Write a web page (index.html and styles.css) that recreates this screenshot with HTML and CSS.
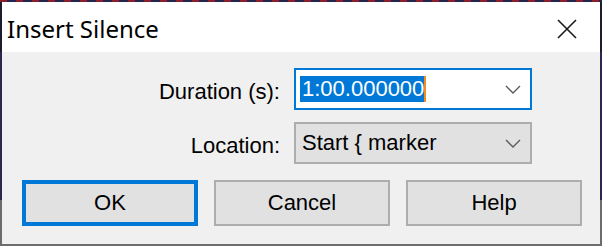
FILE: index.html
```html
<!DOCTYPE html>
<html lang="en">
<head>
    <meta charset="UTF-8">
    <meta name="viewport" content="width=device-width, initial-scale=1.0">
    <title>Insert Silence</title>
    <link rel="stylesheet" href="styles.css">
</head>
<body>
    <div class="dialog">
        <div class="titlebar">
            <span class="title">Insert Silence</span>
            <svg class="close-icon" width="20" height="20" viewBox="0 0 20 20">
                <path d="M1 1 L19 19 M19 1 L1 19" stroke="#1a1a1a" stroke-width="1.6" fill="none"/>
            </svg>
        </div>

        <div class="content">
            <div class="fields">
                <label class="field-label">Duration (s):</label>
                <div class="combo combo-focused">
                    <span class="combo-value"><span class="selection">1:00.000000</span></span>
                    <svg class="chevron" width="16" height="9" viewBox="0 0 16 9">
                        <path d="M1 1 L8 8 L15 1" stroke="#5a5a5a" stroke-width="1.4" fill="none"/>
                    </svg>
                </div>

                <label class="field-label">Location:</label>
                <div class="combo combo-list">
                    <span class="combo-value">Start { marker</span>
                    <svg class="chevron" width="16" height="9" viewBox="0 0 16 9">
                        <path d="M1 1 L8 8 L15 1" stroke="#5a5a5a" stroke-width="1.4" fill="none"/>
                    </svg>
                </div>
            </div>

            <div class="buttons">
                <button class="btn btn-default">OK</button>
                <button class="btn">Cancel</button>
                <button class="btn">Help</button>
            </div>
        </div>
    </div>
</body>
</html>
```

FILE: styles.css
```css
* {
    margin: 0;
    padding: 0;
    box-sizing: border-box;
}

body {
    width: 602px;
    height: 246px;
    padding: 2px;
    overflow: hidden;
    background:
        repeating-linear-gradient(90deg, #8a1f2a 0 7px, #26234f 7px 16px) top / 100% 2px no-repeat,
        linear-gradient(to bottom, #1c1c2c 0, #1c1c2c 52px, #2a2750 52px, #2a2750 200px, #6c6c6c 200px);
}

.dialog {
    display: flex;
    flex-direction: column;
    height: 242px;
    width: 598px;
}

.titlebar {
    height: 50px;
    background: #ffffff;
    display: flex;
    align-items: center;
    justify-content: space-between;
    padding: 0 23px 0 5px;
}

.title {
    font-family: "Noto Sans", sans-serif;
    font-size: 24px;
    color: #000;
    margin-top: 2px;
}

.close-icon {
    display: block;
    margin-top: 3px;
}

.content {
    flex: 1;
    background: #f0f0f0;
    padding: 16px 18px 0 20px;
    font-family: "Liberation Sans", Arial, sans-serif;
    font-size: 22px;
    color: #000;
}

.fields {
    display: grid;
    grid-template-columns: 258px 238px;
    column-gap: 14px;
    row-gap: 12px;
}

.field-label {
    text-align: right;
    align-self: center;
    padding-top: 6px;
}

.combo {
    height: 42px;
    display: flex;
    align-items: center;
    justify-content: space-between;
    padding: 0 9px 0 4px;
    border: 2px solid #adadad;
}

.combo-focused {
    background: #ffffff;
    border-color: #0078d7;
}

.combo-list {
    background: #e1e1e1;
    padding-left: 6px;
}

.selection {
    display: inline-block;
    background: #0078d7;
    color: #ffffff;
    padding: 1px 0 1px 2px;
    border-right: 2px solid #f58a1f;
    line-height: 24px;
}

.chevron {
    display: block;
}

.buttons {
    display: flex;
    gap: 16px;
    margin-top: 16px;
}

.btn {
    width: 176px;
    height: 46px;
    background: #e1e1e1;
    border: 2px solid #adadad;
    font-family: "Liberation Sans", Arial, sans-serif;
    font-size: 22px;
    color: #000;
}

.btn-default {
    border: 4px solid #0078d7;
}
```
